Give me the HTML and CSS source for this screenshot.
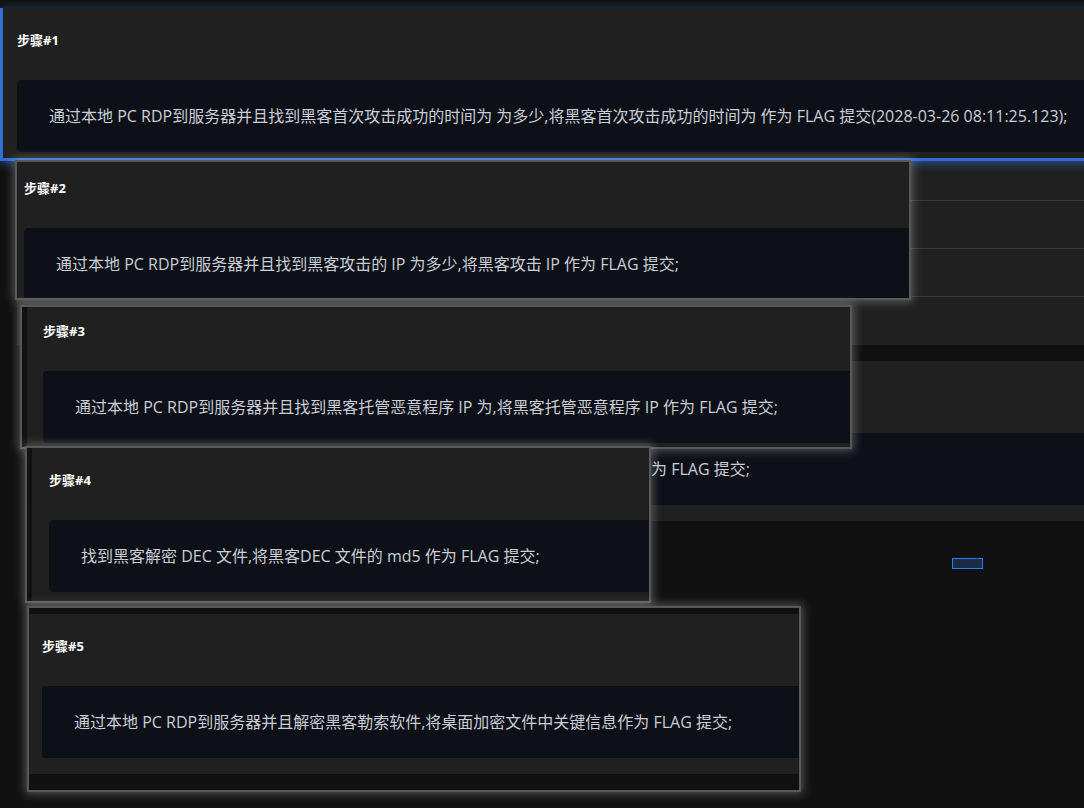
FILE: index.html
```html
<!DOCTYPE html>
<html lang="zh-CN">
<head>
<meta charset="utf-8">
<title>步骤</title>
<link rel="stylesheet" href="styles.css">
</head>
<body>
<div class="page">
  <div class="under-card under-first"></div>
  <div class="under-table">
    <div class="under-row first"></div>
    <div class="under-row"></div>
    <div class="under-row"></div>
    <div class="under-row last"></div>
  </div>
  <div class="under-card under-step">
    <div class="card-head">步骤#3</div>
    <div class="card-body">通过本地 PC RDP到服务器并且找到黑客托管恶意程序 IP 为,将黑客托管恶意程序 IP 作为 FLAG 提交;</div>
  </div>
</div>

<div class="drop-marker"></div>

<div class="ghost ghost-1">
  <div class="card">
    <div class="card-head">步骤#1</div>
    <div class="card-body">通过本地 PC RDP到服务器并且找到黑客首次攻击成功的时间为 为多少,将黑客首次攻击成功的时间为 作为 FLAG 提交(2028-03-26 08:11:25.123);</div>
  </div>
</div>

<div class="ghost ghost-2">
  <div class="card">
    <div class="card-head">步骤#2</div>
    <div class="card-body">通过本地 PC RDP到服务器并且找到黑客攻击的 IP 为多少,将黑客攻击 IP 作为 FLAG 提交;</div>
  </div>
</div>

<div class="ghost ghost-3">
  <div class="card">
    <div class="card-head">步骤#3</div>
    <div class="card-body">通过本地 PC RDP到服务器并且找到黑客托管恶意程序 IP 为,将黑客托管恶意程序 IP 作为 FLAG 提交;</div>
  </div>
</div>

<div class="ghost ghost-4">
  <div class="card">
    <div class="card-head">步骤#4</div>
    <div class="card-body">找到黑客解密 DEC 文件,将黑客DEC 文件的 md5 作为 FLAG 提交;</div>
  </div>
</div>

<div class="ghost ghost-5">
  <div class="card">
    <div class="card-head">步骤#5</div>
    <div class="card-body">通过本地 PC RDP到服务器并且解密黑客勒索软件,将桌面加密文件中关键信息作为 FLAG 提交;</div>
  </div>
</div>
</body>
</html>
```

FILE: styles.css
```css
html, body {
  margin: 0;
  padding: 0;
  background: #111111;
  height: 100%;
  overflow: hidden;
}

body {
  font-family: "Open Sans", "Noto Sans CJK SC", sans-serif;
  position: relative;
}

.page {
  padding: 8px 0 0 17px;
  display: flex;
  flex-direction: column;
  width: 1100px;
}

.under-card {
  background: #202020;
  height: 160px;
  box-sizing: border-box;
}

.under-first {
  height: 152px;
}

.under-table {
  background: #202020;
  display: flex;
  flex-direction: column;
  margin-bottom: 16px;
}

.under-row {
  height: 48px;
  border-top: 1px solid #3a3a3a;
  box-sizing: border-box;
}

.under-row.first {
  height: 40px;
  border-top: none;
}

.under-row.last {
  height: 49px;
}

.under-step {
  margin-left: 8px;
}

.under-step .card-head {
  padding-left: 16px;
}

.under-step .card-body {
  margin-left: -2px;
  padding-left: 24px;
}

.card {
  width: 1180px;
  background: #202020;
  padding: 0 0 16px 16px;
  box-sizing: border-box;
}

.card-head {
  height: 64px;
  line-height: 64px;
  font-size: 13px;
  font-weight: 700;
  color: #ffffff;
  margin-bottom: 8px;
}

.card-body {
  height: 72px;
  line-height: 72px;
  background: #0d1017;
  border-radius: 4px;
  padding-left: 32px;
  font-size: 16px;
  color: #c8ced6;
  white-space: nowrap;
}

.ghost {
  position: absolute;
  overflow: hidden;
  background: #111111;
  border: 2px solid #585858;
  box-sizing: border-box;
  box-shadow: 0 0 9px 2px rgba(210, 210, 210, 0.33);
}

.ghost-1 {
  left: 0;
  top: 8px;
  width: 1100px;
  height: 153px;
  border: none;
  border-left: 3px solid #2f6fd3;
  border-bottom: 3px solid #2f6fd3;
  box-shadow: 0 2px 9px 1px rgba(47, 111, 211, 0.55);
}

.ghost-1 .card {
  margin-left: -2px;
}

.ghost-2 {
  left: 15px;
  top: 160px;
  width: 896px;
  height: 140px;
}

.ghost-2 .card {
  margin-left: -9px;
  margin-top: -6px;
}

.ghost-3 {
  left: 20px;
  top: 305px;
  width: 832px;
  height: 144px;
}

.ghost-3 .card {
  margin-left: 5px;
  margin-top: -8px;
}

.ghost-4 {
  left: 25px;
  top: 446px;
  width: 626px;
  height: 157px;
}

.ghost-4 .card {
  margin-left: 5px;
  padding-left: 17px;
}

.ghost-5 {
  left: 27px;
  top: 606px;
  width: 774px;
  height: 186px;
}

.ghost-5 .card {
  margin-left: -3px;
  margin-top: 6px;
}

.drop-marker {
  position: absolute;
  left: 952px;
  top: 558px;
  width: 31px;
  height: 11px;
  box-sizing: border-box;
  border: 1px solid #2b7cff;
  background: #1b2a45;
}
```
